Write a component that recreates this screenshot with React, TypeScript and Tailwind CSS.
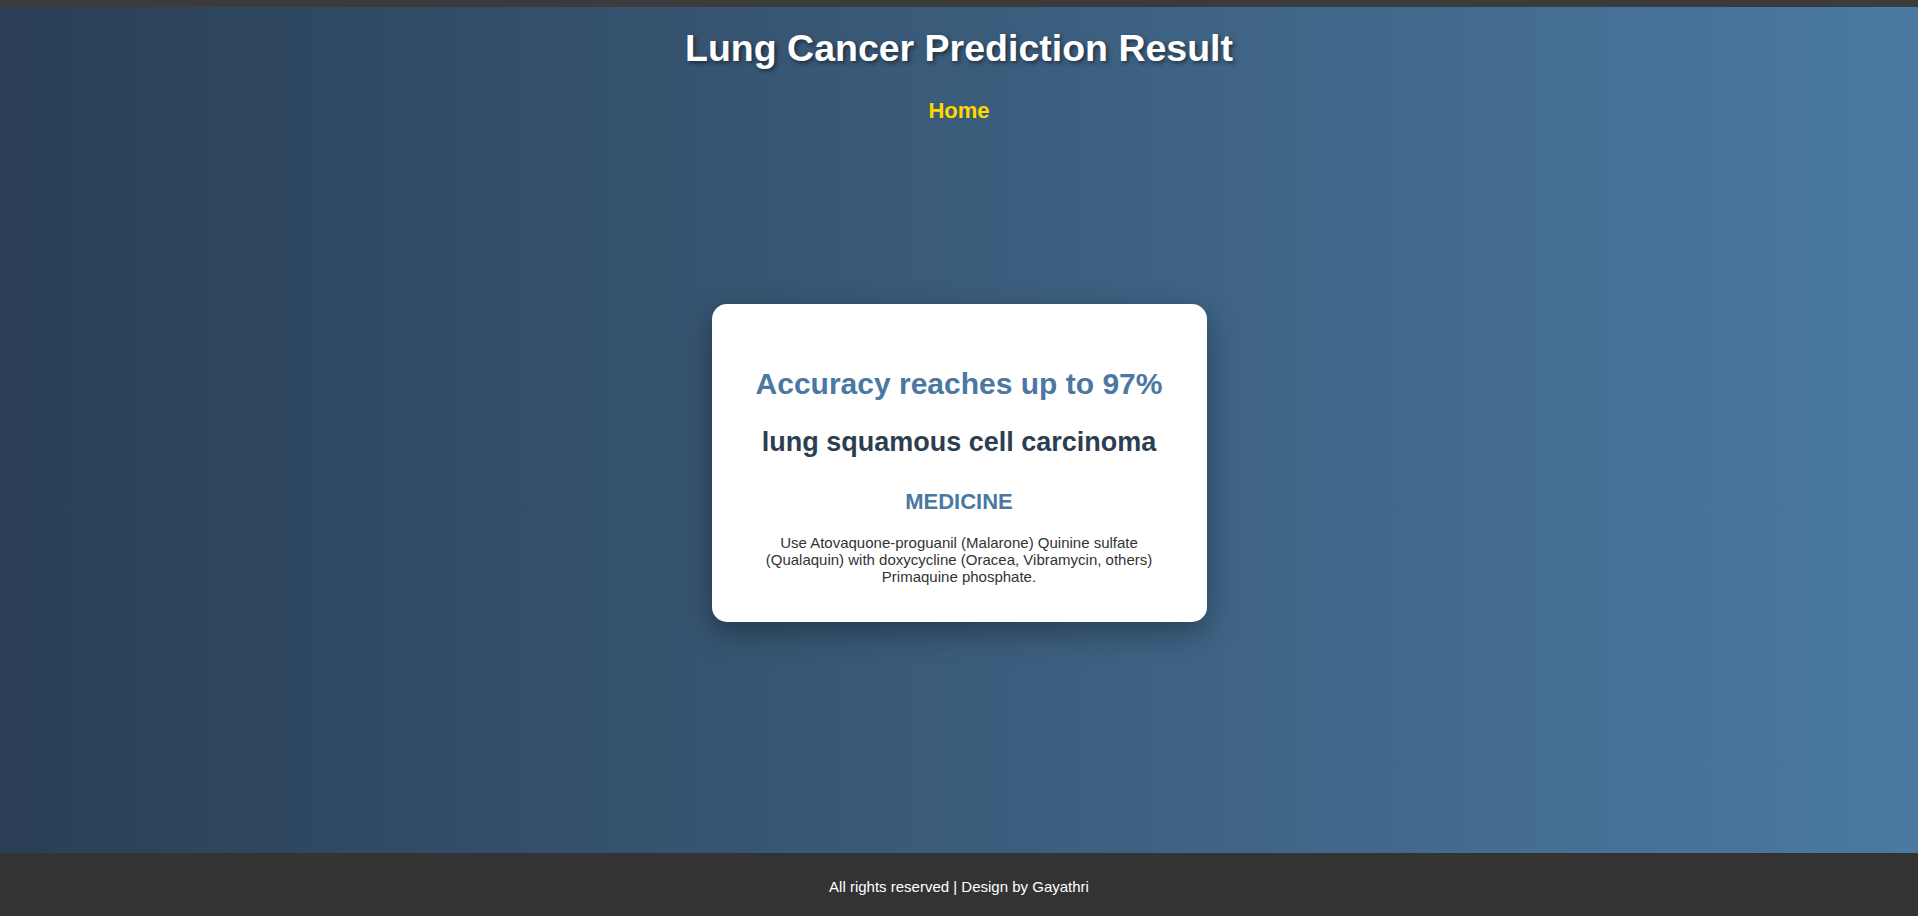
import React from "react";

export default function App() {
  return (
    <div className="min-h-screen flex flex-col font-['Liberation_Sans',Arial,sans-serif]">
      <div className="h-[7px] bg-[#3b3b3b]" />

      <main className="h-[846px] flex flex-col items-center bg-linear-to-r/srgb from-[#2a3f55] to-[#4b79a1]">
        <h1 className="mt-[20px] text-[37.5px] leading-[42px] font-bold text-white [text-shadow:2px_2px_4px_rgba(0,0,0,0.5)]">
          Lung Cancer Prediction Result
        </h1>
        <a href="#" className="mt-[29px] text-[22px] leading-[25px] font-bold text-[#ffd700]">
          Home
        </a>

        <div className="mt-[181px] w-[495px] rounded-[15px] bg-white px-10 pt-[63px] pb-[37px] text-center shadow-[0_10px_30px_rgba(0,0,0,0.35)]">
          <h2 className="text-[30px] leading-[34px] font-bold text-[#4a78a2]">
            Accuracy reaches up to 97%
          </h2>
          <h3 className="mt-[26px] text-[27px] leading-[31px] font-bold text-[#2c3e50]">
            lung squamous cell carcinoma
          </h3>
          <h4 className="mt-[31px] text-[22px] leading-[25px] font-bold text-[#4a78a2]">
            MEDICINE
          </h4>
          <p className="mt-[20px] text-[15px] leading-[17px] text-[#333]">
            Use Atovaquone-proguanil (Malarone) Quinine sulfate (Qualaquin) with doxycycline
            (Oracea, Vibramycin, others) Primaquine phosphate.
          </p>
        </div>
      </main>

      <footer className="h-[63px] bg-[#333] pt-[25px] text-center text-[15px] leading-[17px] text-white">
        All rights reserved | Design by Gayathri
      </footer>
    </div>
  );
}
